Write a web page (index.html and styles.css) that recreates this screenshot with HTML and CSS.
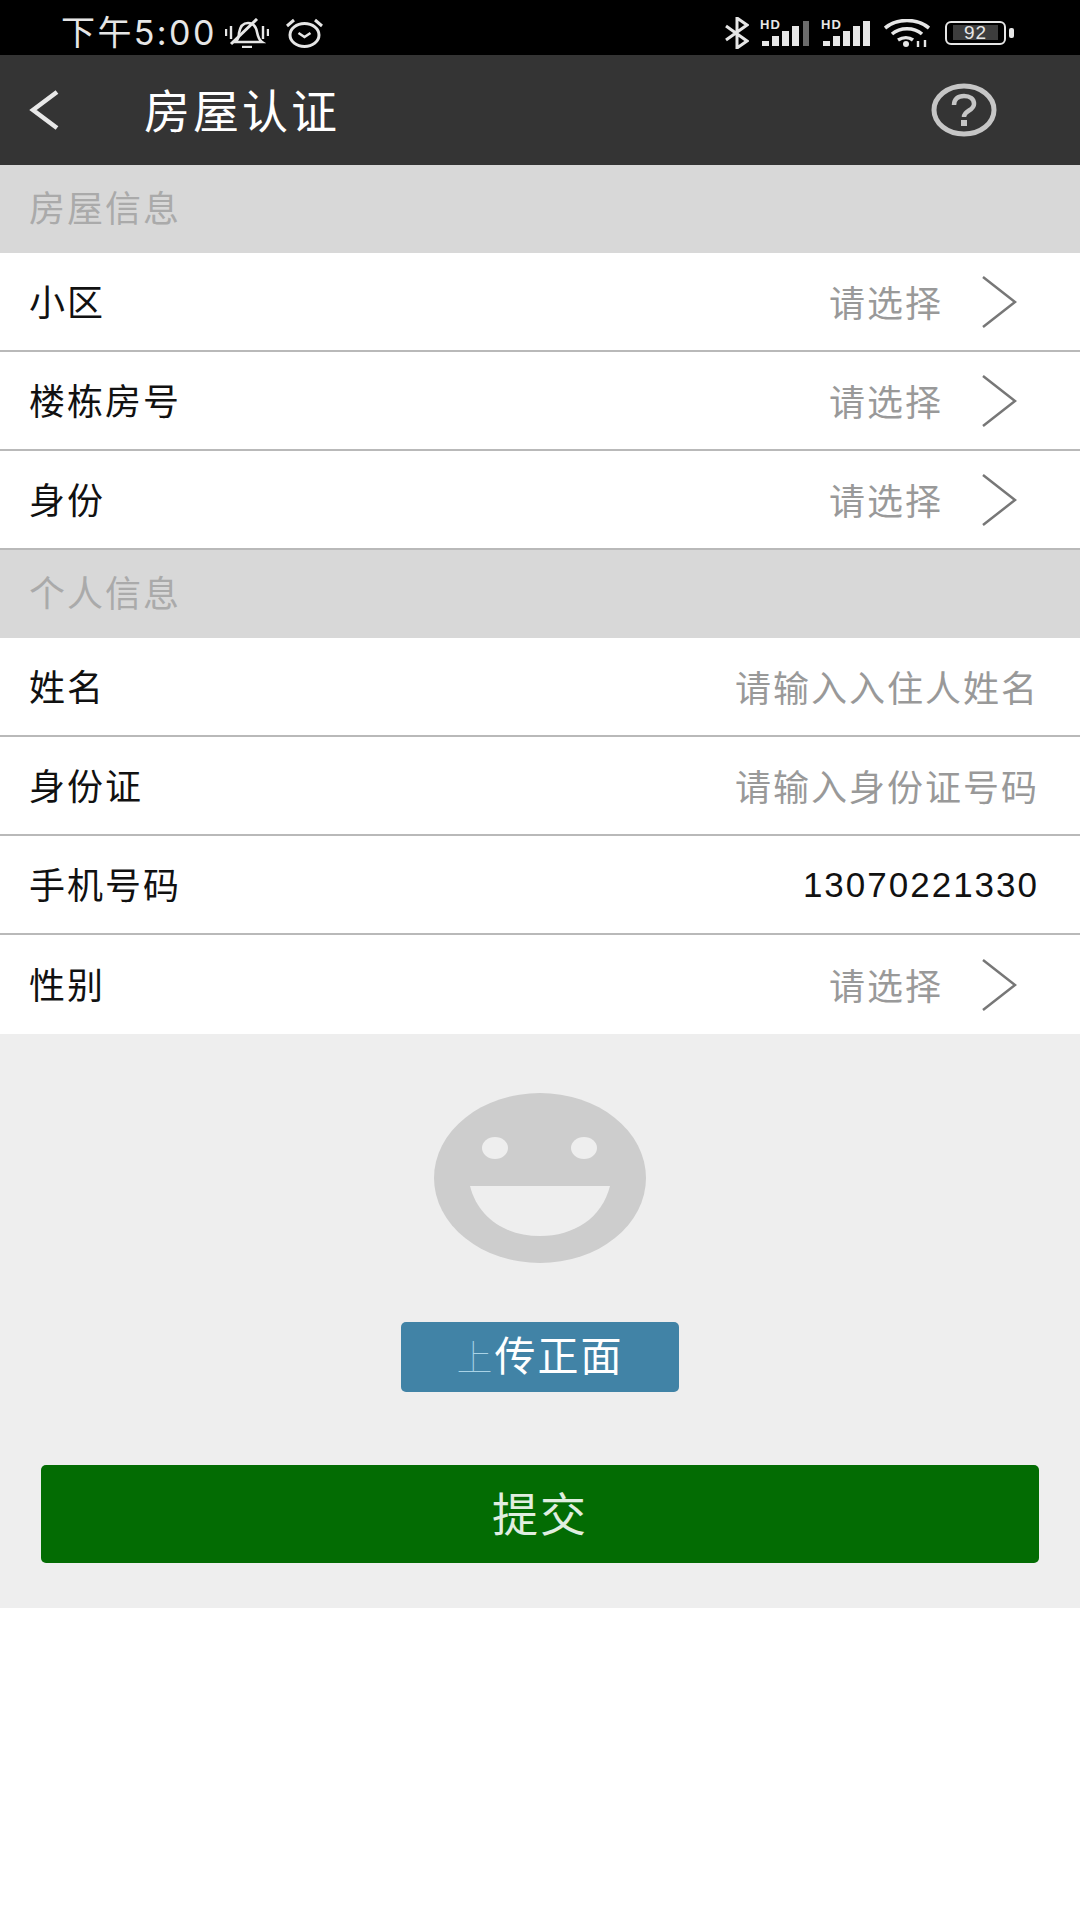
FILE: index.html
```html
<!DOCTYPE html>
<html lang="zh-CN">
<head>
  <meta charset="UTF-8">
  <title>房屋认证</title>
  <link rel="stylesheet" href="styles.css">
</head>
<body>
<!-- Status bar -->
<div class="status-bar">
  <div class="status-left">
    <span class="status-time">下午5:00</span>
    <svg class="ic-bell" width="44" height="30" viewBox="0 0 44 30" fill="none" stroke="#e6e6e6" stroke-width="2.6">
      <path d="M10 24c3-2 4-5 4-9 1-6 4-10 9-10s8 4 9 9c1 5 2 8 5 10z"/>
      <path d="M6 26 32 1" stroke-width="3"/>
      <path d="M17 29h10" stroke-width="2.4"/>
      <path d="M1 11v7M6 8v13M38 8v13M43 11v7" stroke-width="2.4"/>
    </svg>
    <svg class="ic-alarm" width="39" height="30" viewBox="0 0 39 30" fill="none" stroke="#e6e6e6" stroke-width="3">
      <ellipse cx="19.500" cy="17" rx="14.500" ry="11.500"/>
      <path d="M13.500 15l6 4 6-4" stroke-width="2.600"/>
      <path d="M2 8l7-6M37 8l-7-6"/>
    </svg>
  </div>
  <div class="status-right">
    <svg width="24" height="32" viewBox="0 0 24 32" fill="none" stroke="#e6e6e6" stroke-width="3">
      <path d="M1 9l21 15-10 7V1l10 7L1 23"/>
    </svg>
    <svg class="ic-signal" width="50" height="34" viewBox="0 -4 50 34">
      <text x="0" y="9" class="hd-label">HD</text>
      <g fill="#e6e6e6">
        <rect x="2" y="21" width="7" height="5"/>
        <rect x="12" y="16" width="7" height="10"/>
        <rect x="22" y="11" width="7" height="15"/>
        <rect x="32" y="6" width="7" height="20"/>
      </g>
      <rect x="43" y="1" width="6" height="25" fill="#6b6b6b"/>
    </svg>
    <svg class="ic-signal" width="50" height="34" viewBox="0 -4 50 34">
      <text x="0" y="9" class="hd-label">HD</text>
      <g fill="#e6e6e6">
        <rect x="2" y="21" width="7" height="5"/>
        <rect x="12" y="16" width="7" height="10"/>
        <rect x="22" y="11" width="7" height="15"/>
        <rect x="32" y="6" width="7" height="20"/>
        <rect x="42" y="1" width="7" height="25"/>
      </g>
    </svg>
    <svg class="ic-wifi" width="46" height="28" viewBox="0 0 46 28" fill="none" stroke="#e6e6e6" stroke-width="3.600">
      <path d="M1 9c12-10 32-10 44 0"/>
      <path d="M8 15c8-7 22-7 30 0"/>
      <path d="M14 21c5-3 11-3 15 0"/>
      <circle cx="22" cy="25" r="3" fill="#e6e6e6" stroke="none"/>
      <path d="M34 22v6M41 21v7" stroke-width="2.400"/>
    </svg>
    <div class="battery">
      <div class="battery-body"><span class="battery-level">92</span></div>
      <div class="battery-tip"></div>
    </div>
  </div>
</div>

<!-- Title bar -->
<header class="title-bar">
  <svg class="back" width="30" height="40" viewBox="0 0 30 40" fill="none" stroke="#e8e8e8" stroke-width="4.500">
    <path d="M28 2 4 20l24 18"/>
  </svg>
  <h1>房屋认证</h1>
  <svg class="help" width="66" height="54" viewBox="0 0 66 54" fill="none" stroke="#c6c6c6">
    <ellipse cx="33" cy="27" rx="30" ry="24" stroke-width="5"/>
    <path d="M23 22c0-6 4-9 10-9s10 3 10 8c0 7-10 6-10 13" stroke-width="4.500"/>
    <rect x="30" y="37" width="6" height="6" fill="#c6c6c6" stroke="none"/>
  </svg>
</header>

<main>
  <div class="section-label">房屋信息</div>
  <div class="row">
    <span class="row-name">小区</span>
    <span class="row-hint">请选择</span>
    <svg class="chevron" width="36" height="54" viewBox="0 0 36 54" fill="none" stroke="#777" stroke-width="2.500"><path d="M2 2l32 25L2 52"/></svg>
  </div>
  <div class="row">
    <span class="row-name">楼栋房号</span>
    <span class="row-hint">请选择</span>
    <svg class="chevron" width="36" height="54" viewBox="0 0 36 54" fill="none" stroke="#777" stroke-width="2.500"><path d="M2 2l32 25L2 52"/></svg>
  </div>
  <div class="row">
    <span class="row-name">身份</span>
    <span class="row-hint">请选择</span>
    <svg class="chevron" width="36" height="54" viewBox="0 0 36 54" fill="none" stroke="#777" stroke-width="2.500"><path d="M2 2l32 25L2 52"/></svg>
  </div>

  <div class="section-label">个人信息</div>
  <div class="row">
    <span class="row-name">姓名</span>
    <span class="row-input">请输入入住人姓名</span>
  </div>
  <div class="row">
    <span class="row-name">身份证</span>
    <span class="row-input">请输入身份证号码</span>
  </div>
  <div class="row">
    <span class="row-name">手机号码</span>
    <span class="row-value">13070221330</span>
  </div>
  <div class="row row-last">
    <span class="row-name">性别</span>
    <span class="row-hint">请选择</span>
    <svg class="chevron" width="36" height="54" viewBox="0 0 36 54" fill="none" stroke="#777" stroke-width="2.500"><path d="M2 2l32 25L2 52"/></svg>
  </div>

  <!-- Upload area -->
  <section class="upload">
    <svg class="smiley" width="212" height="170" viewBox="0 0 212 170">
      <ellipse cx="106" cy="85" rx="106" ry="85" fill="#cdcdcd"/>
      <ellipse cx="61" cy="55" rx="13" ry="11" fill="#eeeeee"/>
      <ellipse cx="150" cy="55" rx="13" ry="11" fill="#eeeeee"/>
      <path d="M36 93h140c-8 32-36 50-70 50s-62-18-70-50z" fill="#eeeeee"/>
    </svg>
    <button class="btn-upload"><span class="btn-upload-first">上</span>传正面</button>
    <button class="btn-submit">提交</button>
  </section>
</main>
</body>
</html>
```

FILE: styles.css
```css
/* Basic reset and body styling */
html, body {
  margin: 0;
  padding: 0;
  height: 1920px;
  background-color: #fff;
}
body {
  width: 1080px;
  overflow: hidden;
  font-family: "Noto Sans CJK SC", "Liberation Sans", sans-serif;
  color: #111;
}

/* Status bar */
.status-bar {
  height: 55px;
  box-sizing: border-box;
  background-color: #000;
  display: flex;
  justify-content: space-between;
  align-items: center;
  padding: 10px 66px 0 61px;
  color: #e6e6e6;
}
.status-left {
  display: flex;
  align-items: center;
}
.status-time {
  font-family: Inter, "Noto Sans CJK SC", sans-serif;
  font-size: 34px;
  line-height: 40px;
  letter-spacing: 2.4px;
}
.ic-bell {
  margin-left: 8px;
}
.ic-alarm {
  margin-left: 16px;
}
.status-right {
  display: flex;
  align-items: center;
  gap: 11px;
}
.hd-label {
  font-family: "Liberation Sans", sans-serif;
  font-size: 13px;
  font-weight: bold;
  letter-spacing: 1px;
  fill: #e6e6e6;
}
.ic-wifi {
  margin-left: 2px;
}
.battery {
  display: flex;
  align-items: center;
  gap: 3px;
  margin-left: 4px;
}
.battery-body {
  width: 45px;
  height: 20px;
  padding: 0 6px;
  border: 2px solid #e6e6e6;
  border-radius: 6px;
  display: flex;
  align-items: center;
}
.battery-level {
  flex: 1;
  height: 15px;
  line-height: 15px;
  background-color: #3d3d3d;
  font-family: "Liberation Sans", sans-serif;
  font-size: 19px;
  letter-spacing: 1px;
  text-align: center;
  color: #e6e6e6;
}
.battery-tip {
  width: 5px;
  height: 10px;
  background-color: #e6e6e6;
  border-radius: 2px;
}

/* Title bar */
.title-bar {
  height: 110px;
  background-color: #343434;
  display: flex;
  align-items: center;
  padding: 0 83px 0 29px;
}
.title-bar h1 {
  margin: 0 0 0 85px;
  padding-bottom: 4px;
  flex: 1;
  font-size: 46px;
  font-weight: normal;
  letter-spacing: 3px;
  color: #fff;
}

/* Form rows */
.section-label {
  height: 88px;
  line-height: 82px;
  padding-left: 29px;
  background-color: #d8d8d8;
  color: #aaa;
  font-size: 36px;
  letter-spacing: 2px;
}
.row {
  height: 99px;
  box-sizing: border-box;
  display: flex;
  align-items: center;
  padding: 0 41px 0 29px;
  background-color: #fff;
  border-bottom: 2px solid #b9b9b9;
  font-size: 36px;
}
.row-last {
  border-bottom: none;
}
.row-name {
  flex: 1;
  padding-bottom: 4px;
  letter-spacing: 2px;
}
.row-hint,
.row-input {
  padding-bottom: 2px;
  color: #999;
  letter-spacing: 2px;
}
.row-value {
  font-family: "Liberation Sans", sans-serif;
  font-size: 35px;
  letter-spacing: 2px;
  color: #111;
}
.chevron {
  margin-left: 38px;
  margin-right: 22px;
}

/* Upload area */
.upload {
  height: 574px;
  background-color: #eee;
  display: flex;
  flex-direction: column;
  align-items: center;
  padding: 59px 41px 0;
  box-sizing: border-box;
}
.btn-upload {
  width: 278px;
  height: 70px;
  margin-top: 59px;
  padding: 0 0 8px;
  border: none;
  border-radius: 5px;
  background-color: #4183a6;
  color: #fff;
  font-family: inherit;
  font-size: 41px;
  letter-spacing: 2px;
}
.btn-upload-first {
  color: #a9d3e6;
  font-size: 36px;
  font-weight: 100;
}
.btn-submit {
  width: 100%;
  height: 98px;
  margin-top: 73px;
  padding: 0 0 6px;
  border: none;
  border-radius: 5px;
  background-color: #036c03;
  color: #e0eee0;
  font-family: inherit;
  font-size: 46px;
  letter-spacing: 2px;
}
```
